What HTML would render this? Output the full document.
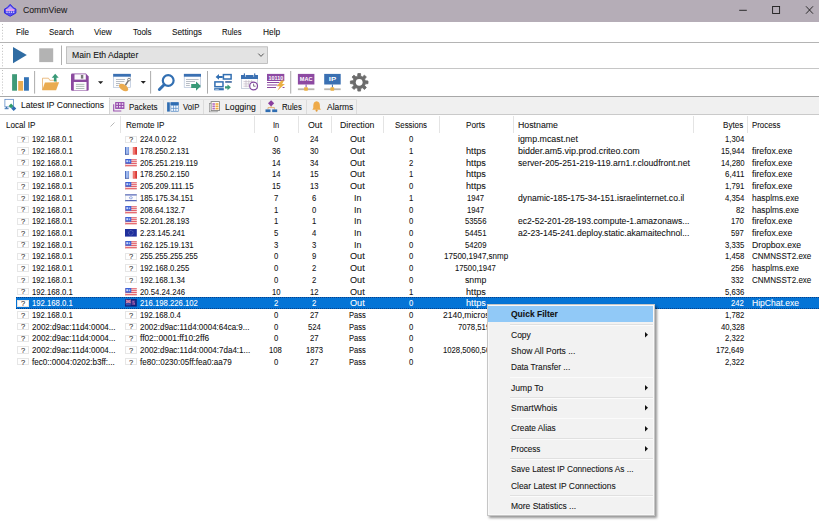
<!DOCTYPE html>
<html><head><meta charset="utf-8"><title>CommView</title>
<style>
html,body{margin:0;padding:0;background:#fff;overflow:hidden}
body{width:819px;height:522px;position:relative;font-family:"Liberation Sans",sans-serif;font-size:8.5px;color:#111}
.t{-webkit-text-stroke:0.07px currentColor;position:absolute;white-space:pre;line-height:12px;height:12px;transform-origin:0 50%;display:block}
svg{position:absolute;overflow:visible}
</style></head><body>
<div style="position:absolute;left:0px;top:0px;width:819px;height:22px;background:#b5adb7;"></div>
<svg style="left:4px;top:3.6px" width="12.4" height="12.6" viewBox="0 0 25 25">
<polygon points="12.5,0.5 19,7.5 24,10 24,18 12.5,24.5 1,18 1,10 6,7.5" fill="#5a50f0"/>
<polygon points="12.5,0.5 19,7.5 24,10 24,18 12.5,24.5 1,18 1,10 6,7.5" fill="none" stroke="#2f2ae0" stroke-width="2"/>
<polygon points="12.5,4 18,9 21,11 4,11 7,9" fill="#b9a0f6"/>
<rect x="4" y="10" width="17" height="4" fill="#e6a0ee"/>
<rect x="3" y="14" width="19" height="4.4" fill="#3a35e4"/>
<rect x="4.5" y="15" width="3" height="2.4" fill="#fff"/><rect x="9" y="15" width="3" height="2.4" fill="#eef"/><rect x="13.5" y="15" width="3" height="2.4" fill="#fff"/><rect x="18" y="15" width="3" height="2.4" fill="#eef"/>
</svg>
<span class="t" style="left:22.90px;top:4.40px;transform:scaleX(0.9886);font-size:8.8px;color:#1a1a1a">CommView</span>
<svg style="left:735px;top:0" width="84" height="22" viewBox="0 0 84 22" fill="none" stroke="#1c1c1c" stroke-width="0.9">
<path d="M4.2 10.3H11.8"/>
<rect x="37.6" y="6.5" width="7" height="7"/>
<path d="M71 6.3L78 13.7M78 6.3L71 13.7"/>
</svg>
<div style="position:absolute;left:0px;top:22px;width:819px;height:20px;background:#fff;"></div>
<span class="t" style="left:15.80px;top:26.20px;transform:scaleX(0.9286);font-size:8.7px">File</span>
<span class="t" style="left:48.60px;top:26.20px;transform:scaleX(0.9081);font-size:8.7px">Search</span>
<span class="t" style="left:94.00px;top:26.20px;transform:scaleX(0.9525);font-size:8.7px">View</span>
<span class="t" style="left:132.60px;top:26.20px;transform:scaleX(0.9171);font-size:8.7px">Tools</span>
<span class="t" style="left:171.70px;top:26.20px;transform:scaleX(0.9525);font-size:8.7px">Settings</span>
<span class="t" style="left:222.10px;top:26.20px;transform:scaleX(0.8776);font-size:8.7px">Rules</span>
<span class="t" style="left:262.50px;top:26.20px;transform:scaleX(0.9622);font-size:8.7px">Help</span>
<svg style="left:0;top:0" width="6" height="120"><rect x="2" y="24.0" width="1" height="1" fill="#bdbdbd"/><rect x="2" y="26.9" width="1" height="1" fill="#bdbdbd"/><rect x="2" y="29.8" width="1" height="1" fill="#bdbdbd"/><rect x="2" y="32.7" width="1" height="1" fill="#bdbdbd"/><rect x="2" y="35.6" width="1" height="1" fill="#bdbdbd"/><rect x="2" y="38.5" width="1" height="1" fill="#bdbdbd"/></svg>
<div style="position:absolute;left:0px;top:42px;width:819px;height:1px;background:#b4b4b4;"></div>
<svg style="left:0;top:0" width="6" height="120"><rect x="2" y="45.0" width="1" height="1" fill="#bdbdbd"/><rect x="2" y="47.9" width="1" height="1" fill="#bdbdbd"/><rect x="2" y="50.8" width="1" height="1" fill="#bdbdbd"/><rect x="2" y="53.7" width="1" height="1" fill="#bdbdbd"/><rect x="2" y="56.6" width="1" height="1" fill="#bdbdbd"/><rect x="2" y="59.5" width="1" height="1" fill="#bdbdbd"/><rect x="2" y="62.4" width="1" height="1" fill="#bdbdbd"/><rect x="2" y="65.3" width="1" height="1" fill="#bdbdbd"/></svg>
<svg style="left:0;top:43px" width="280" height="25" viewBox="0 43 280 25">
<polygon points="13,47 13,63.3 26.8,55.1" fill="#2f6ca3"/>
<rect x="39.2" y="48.3" width="14" height="13.8" fill="#b3b3b3"/>
<rect x="61" y="45.5" width="0.9" height="19.5" fill="#a8a8a8"/>
<rect x="66.5" y="46.8" width="201" height="16.6" fill="#e3e3e3" stroke="#b5b5b5" stroke-width="0.8"/>
<path d="M258.3 53.6L261 56.4L263.7 53.6" fill="none" stroke="#444" stroke-width="0.9"/>
</svg>
<span class="t" style="left:71.80px;top:49.40px;transform:scaleX(0.9947);font-size:8.7px">Main Eth Adapter</span>
<div style="position:absolute;left:0px;top:68.0px;width:819px;height:1px;background:#c6c6c6;"></div>
<svg style="left:0;top:0" width="6" height="120"><rect x="2" y="70.0" width="1" height="1" fill="#bdbdbd"/><rect x="2" y="72.9" width="1" height="1" fill="#bdbdbd"/><rect x="2" y="75.8" width="1" height="1" fill="#bdbdbd"/><rect x="2" y="78.7" width="1" height="1" fill="#bdbdbd"/><rect x="2" y="81.6" width="1" height="1" fill="#bdbdbd"/><rect x="2" y="84.5" width="1" height="1" fill="#bdbdbd"/><rect x="2" y="87.4" width="1" height="1" fill="#bdbdbd"/><rect x="2" y="90.3" width="1" height="1" fill="#bdbdbd"/><rect x="2" y="93.2" width="1" height="1" fill="#bdbdbd"/></svg>
<svg style="left:0;top:0" width="400" height="96" viewBox="0 0 400 96"><rect x="12.1" y="74.2" width="4.9" height="16.5" fill="#3f9a78"/><rect x="18.2" y="81" width="4.9" height="9.7" fill="#eaab50"/><rect x="24" y="77.2" width="4.9" height="13.5" fill="#3373b6"/><rect x="34.2" y="71" width="0.9" height="22.6" fill="#a2a2a2"/><path d="M42.5 90v-11.8h6l1.3 2.1h6.4v3" fill="#fffdf8" stroke="#e2a355" stroke-width="0.7"/><path d="M44.9 82.6l14.2-0.3-3 8h-13.9z" fill="#eaab50"/><path d="M55.2 73.8l3.5 3.9h-2.2v3.8h-2.6v-3.8h-2.2z" fill="#3a9a78"/><path d="M71 74.9q0-1.3 1.3-1.3h13.6l2.8 2.8v13q0 1.3-1.3 1.3h-15.1q-1.3 0-1.3-1.3z" fill="#8b4a9f"/><rect x="74.5" y="74.3" width="11.3" height="5.3" fill="#fbf9fc"/><rect x="80.9" y="75" width="2.4" height="3.6" fill="#777"/><rect x="73.8" y="82" width="12.7" height="8.3" fill="#fcfcfc"/><rect x="75.9" y="83.9" width="8.5" height="0.8" fill="#9ab0a4"/><rect x="75.9" y="85.9" width="8.5" height="0.8" fill="#9ab0a4"/><rect x="75.9" y="88" width="8.5" height="0.8" fill="#9ab0a4"/><polygon points="98,81.2 103.2,81.2 100.6,83.9" fill="#222"/><rect x="113.5" y="74.2" width="17" height="13.3" fill="#fcfcfd" stroke="#a9bad2" stroke-width="0.6"/><rect x="113.2" y="73.9" width="17.6" height="2.8" fill="#3a70b2"/><rect x="116" y="79.1" width="9" height="0.7" fill="#9aa3ad"/><rect x="116" y="81.1" width="8.4" height="0.7" fill="#9aa3ad"/><rect x="116" y="83.1" width="4.2" height="0.7" fill="#9aa3ad"/><rect x="116" y="85.1" width="2.6" height="0.7" fill="#9aa3ad"/><path d="M125.6 85l2.8-4.3" stroke="#7a7a7a" stroke-width="1.5" stroke-linecap="round"/><circle cx="129" cy="79.6" r="1.35" fill="#fff" stroke="#7a7a7a" stroke-width="0.9"/><ellipse cx="123.6" cy="87.5" rx="5.2" ry="2.9" transform="rotate(32 123.6 87.5)" fill="#eaab50"/><polygon points="140.7,81.1 145.9,81.1 143.3,83.8" fill="#222"/><rect x="150.2" y="71" width="0.9" height="22.6" fill="#a2a2a2"/><path d="M163.6 85.2l-4.2 4.3" stroke="#326fb2" stroke-width="3" stroke-linecap="round"/><circle cx="168.2" cy="80.5" r="5.4" fill="#fff" stroke="#326fb2" stroke-width="2.2"/><rect x="184.2" y="74.2" width="16.5" height="13.4" fill="#fcfcfd" stroke="#a9bad2" stroke-width="0.6"/><rect x="183.9" y="73.9" width="17.1" height="2.8" fill="#3a70b2"/><rect x="186" y="79" width="12.6" height="0.7" fill="#9aa3ad"/><rect x="186" y="81" width="9" height="0.7" fill="#9aa3ad"/><rect x="186" y="83" width="3.8" height="0.7" fill="#9aa3ad"/><rect x="186" y="85" width="3.8" height="0.7" fill="#9aa3ad"/><path d="M191.2 84.1h4.8v-2.7l4.9 4.7-4.9 4.7v-2.9h-4.8z" fill="#3a9a78"/><rect x="207" y="71" width="0.9" height="22.6" fill="#a2a2a2"/><path d="M215.6 76.9l3.4-2.8v1.8h3.7v2h-3.7v1.8z" fill="#326fb2"/><rect x="223.4" y="74.6" width="7.7" height="4.4" fill="#fff" stroke="#326fb2" stroke-width="1.5"/><rect x="225.2" y="81.2" width="6.6" height="1.5" fill="#2d5a96"/><rect x="214.9" y="81.9" width="8.1" height="4.8" fill="#fff" stroke="#326fb2" stroke-width="1.5"/><rect x="214.2" y="88.1" width="9.6" height="2.2" fill="#326fb2"/><rect x="215.2" y="88.9" width="3.6" height="0.7" fill="#dfe8f4"/><path d="M230.9 87.3l-3.4 2.9v-1.8h-2.5v-2.2h2.5v-1.8z" fill="#3a9a78"/><rect x="241.3" y="75.3" width="16.4" height="13" fill="#fcfcfd" stroke="#a9b4c8" stroke-width="0.6"/><rect x="241" y="75" width="17" height="4" fill="#3a70b2"/><rect x="243.8" y="73.4" width="1.2" height="3.4" fill="#3a70b2"/><rect x="254.1" y="73.4" width="1.2" height="3.4" fill="#3a70b2"/><rect x="245" y="75" width="0.7" height="1.8" fill="#dfe8f4"/><rect x="253.4" y="75" width="0.7" height="1.8" fill="#dfe8f4"/><path d="M243.5 81.6h9M243.5 83.9h6M243.5 86.2h5M246 80.2v7M248.8 80.2v7M251.6 80.2v3" stroke="#c3b8c6" stroke-width="0.7" fill="none"/><circle cx="253.6" cy="86" r="3.9" fill="#fff" stroke="#81459e" stroke-width="1.2"/><path d="M253.6 83.7v2.5h2" stroke="#4a3a5a" stroke-width="0.7" fill="none"/><rect x="267" y="73.9" width="17.3" height="7.1" fill="#8d4aa2"/><rect x="267" y="82" width="12.4" height="1" fill="#8d4aa2"/><rect x="267" y="84.5" width="10.6" height="1" fill="#8d4aa2"/><rect x="267" y="87" width="9" height="1" fill="#8d4aa2"/><rect x="282.6" y="87" width="1.9" height="1" fill="#8d4aa2"/><path d="M281.2 80.4h2.9l-2 3.6h2.8l-7.6 6.7 2.5-4.5h-3z" fill="#eab045"/><rect x="290.3" y="71" width="0.9" height="22.6" fill="#a2a2a2"/><rect x="297.9" y="73.9" width="16.5" height="10.6" fill="#8d4aa2"/><rect x="297.9" y="88.35" width="16.5" height="1.8" fill="#b9b6b0"/><rect x="305.6" y="84.5" width="1" height="3" fill="#8d4aa2"/><rect x="304.1" y="87.2" width="3.8" height="3.5" rx="0.6" fill="#eab045"/><rect x="324.2" y="73.9" width="16.5" height="10.6" fill="#3a70b2"/><rect x="324.2" y="88.35" width="16.5" height="1.8" fill="#b9b6b0"/><rect x="331.9" y="84.5" width="1" height="3" fill="#3a70b2"/><rect x="330.4" y="87.2" width="3.8" height="3.5" rx="0.6" fill="#eab045"/><text x="306.15" y="81.4" font-family="Liberation Sans,sans-serif" font-weight="bold" font-size="6" fill="#fff" text-anchor="middle" textLength="12.8" lengthAdjust="spacingAndGlyphs">MAC</text><text x="332.45" y="81.4" font-family="Liberation Sans,sans-serif" font-weight="bold" font-size="6" fill="#fff" text-anchor="middle" textLength="7.4" lengthAdjust="spacingAndGlyphs">IP</text><text x="275.9" y="79.8" font-family="Liberation Sans,sans-serif" font-weight="bold" font-size="6" fill="#fff" text-anchor="middle" textLength="14.6" lengthAdjust="spacingAndGlyphs">10110</text><polygon points="368.00,80.97 368.00,83.63 365.30,83.86 364.62,85.51 366.36,87.58 364.48,89.46 362.41,87.72 360.76,88.40 360.53,91.10 357.87,91.10 357.64,88.40 355.99,87.72 353.92,89.46 352.04,87.58 353.78,85.51 353.10,83.86 350.40,83.63 350.40,80.97 353.10,80.74 353.78,79.09 352.04,77.02 353.92,75.14 355.99,76.88 357.64,76.20 357.87,73.50 360.53,73.50 360.76,76.20 362.41,76.88 364.48,75.14 366.36,77.02 364.62,79.09 365.30,80.74" fill="#6c6c6c" stroke="#6c6c6c" stroke-width="0.8" stroke-linejoin="round"/><circle cx="359.2" cy="82.3" r="3.4" fill="#fff"/></svg>
<div style="position:absolute;left:0px;top:95.8px;width:819px;height:1px;background:#a8a8a8;"></div>
<div style="position:absolute;left:0px;top:96.8px;width:819px;height:18px;background:#f0f0f0;"></div>
<div style="position:absolute;left:0px;top:96.8px;width:109px;height:18.2px;background:#fff;"></div>
<div style="position:absolute;left:109px;top:98px;width:0.8px;height:16px;background:#d5d5d5;"></div>
<div style="position:absolute;left:162.7px;top:98.8px;width:0.8px;height:15px;background:#dcdcdc;"></div>
<div style="position:absolute;left:203.3px;top:98.8px;width:0.8px;height:15px;background:#dcdcdc;"></div>
<div style="position:absolute;left:260.2px;top:98.8px;width:0.8px;height:15px;background:#dcdcdc;"></div>
<div style="position:absolute;left:306.1px;top:98.8px;width:0.8px;height:15px;background:#dcdcdc;"></div>
<div style="position:absolute;left:356.1px;top:98.8px;width:0.8px;height:15px;background:#dcdcdc;"></div>
<div style="position:absolute;left:109px;top:98.6px;width:248px;height:0.8px;background:#e2e2e2;"></div>
<div style="position:absolute;left:0px;top:113.9px;width:819px;height:1.4px;background:#cacaca;"></div>
<svg style="left:0;top:0" width="400" height="116" viewBox="0 0 400 116"><rect x="4.9" y="99.3" width="8.6" height="7.6" fill="#fff" stroke="#4a7cc0" stroke-width="0.7"/><rect x="4.6" y="108.2" width="4" height="1" fill="#3a70b2"/><rect x="5.8" y="106.8" width="1.4" height="1.6" fill="#3a70b2"/><rect x="9.4" y="104.2" width="3.4" height="3.4" transform="rotate(45 11.1 105.9)" fill="#2e9b6c"/><rect x="11.9" y="106.7" width="3.6" height="3.6" transform="rotate(45 13.7 108.5)" fill="#2f6db2"/><path d="M113.7 104.2v6.8h7.6" fill="none" stroke="#9a50b0" stroke-width="1.1"/><rect x="115.2" y="102.1" width="9.2" height="6.8" fill="#9346aa"/><rect x="116.3" y="103.2" width="1.6" height="1.6" fill="#f0e0f5"/><rect x="116.3" y="105.9" width="1.6" height="1.6" fill="#f0e0f5"/><rect x="119.0" y="103.2" width="1.6" height="1.6" fill="#f0e0f5"/><rect x="119.0" y="105.9" width="1.6" height="1.6" fill="#f0e0f5"/><rect x="121.7" y="103.2" width="1.6" height="1.6" fill="#f0e0f5"/><rect x="121.7" y="105.9" width="1.6" height="1.6" fill="#f0e0f5"/><rect x="167.1" y="102.3" width="2.7" height="9.3" fill="#2f6db2"/><rect x="170.6" y="102.3" width="8" height="9.3" fill="#4a84c4"/><rect x="170.6" y="102.3" width="8" height="2.7" fill="#2f6db2"/><rect x="171.2" y="105.6" width="1.9" height="2.3" fill="#f4f8fd"/><rect x="171.2" y="108.6" width="1.9" height="2.3" fill="#f4f8fd"/><rect x="173.7" y="105.6" width="1.9" height="2.3" fill="#f4f8fd"/><rect x="173.7" y="108.6" width="1.9" height="2.3" fill="#f4f8fd"/><rect x="176.2" y="105.6" width="1.9" height="2.3" fill="#f4f8fd"/><rect x="176.2" y="108.6" width="1.9" height="2.3" fill="#f4f8fd"/><rect x="209.6" y="103.4" width="7.6" height="8.4" fill="#f8f8f8" stroke="#8f8f8f" stroke-width="0.7"/><rect x="211.1" y="101.6" width="8.4" height="9" fill="#fffcf4" stroke="#7a7a7a" stroke-width="0.8"/><rect x="212.4" y="103.2" width="2.5" height="1.6" fill="#b06ac4"/><rect x="215.5" y="103.2" width="3" height="1.6" fill="#f0ac40"/><rect x="212.4" y="105.5" width="2.5" height="1.6" fill="#b06ac4"/><rect x="215.5" y="105.5" width="3" height="1.6" fill="#f0ac40"/><rect x="212.4" y="107.8" width="2.5" height="1.6" fill="#b06ac4"/><rect x="215.5" y="107.8" width="3" height="1.6" fill="#f0ac40"/><rect x="268.9" y="101.1" width="4.4" height="4.4" transform="rotate(45 271.1 103.3)" fill="#8a3f9e"/><path d="M271.1 106v1.6M268 109.6v-2h6.4v2" stroke="#e0a45c" stroke-width="0.8" fill="none"/><rect x="265.5" y="109.4" width="5" height="2.7" fill="#2f6db2"/><rect x="272.2" y="109.4" width="5" height="2.7" fill="#2f6db2"/><path d="M316.6 101.3q3.3 0.4 3.3 4.4v2.4l1 1.6h-8.6l1-1.6v-2.4q0-4 3.3-4.4z" fill="#eeaa48"/><circle cx="316.6" cy="110.6" r="1.1" fill="#e09a3a"/></svg>
<span class="t" style="left:21.00px;top:99.20px;transform:scaleX(0.9783);font-size:8.7px">Latest IP Connections</span>
<span class="t" style="left:129.40px;top:100.80px;transform:scaleX(0.9221);font-size:8.7px">Packets</span>
<span class="t" style="left:183.10px;top:100.80px;transform:scaleX(0.8933);font-size:8.7px">VoIP</span>
<span class="t" style="left:225.10px;top:100.80px;transform:scaleX(0.9961);font-size:8.7px">Logging</span>
<span class="t" style="left:281.90px;top:100.80px;transform:scaleX(0.8911);font-size:8.7px">Rules</span>
<span class="t" style="left:327.10px;top:100.80px;transform:scaleX(0.9729);font-size:8.7px">Alarms</span>
<div style="position:absolute;left:0px;top:115.7px;width:819px;height:16.3px;background:#fff;"></div>
<div style="position:absolute;left:120px;top:115.5px;width:0.8px;height:17.5px;background:#e4e4e4;"></div>
<div style="position:absolute;left:254px;top:115.5px;width:0.8px;height:17.5px;background:#e4e4e4;"></div>
<div style="position:absolute;left:297.5px;top:115.5px;width:0.8px;height:17.5px;background:#e4e4e4;"></div>
<div style="position:absolute;left:331.4px;top:115.5px;width:0.8px;height:17.5px;background:#e4e4e4;"></div>
<div style="position:absolute;left:383px;top:115.5px;width:0.8px;height:17.5px;background:#e4e4e4;"></div>
<div style="position:absolute;left:438.6px;top:115.5px;width:0.8px;height:17.5px;background:#e4e4e4;"></div>
<div style="position:absolute;left:513px;top:115.5px;width:0.8px;height:17.5px;background:#e4e4e4;"></div>
<div style="position:absolute;left:693px;top:115.5px;width:0.8px;height:17.5px;background:#e4e4e4;"></div>
<div style="position:absolute;left:746.5px;top:115.5px;width:0.8px;height:17.5px;background:#e4e4e4;"></div>
<span class="t" style="left:5.60px;top:118.70px;transform:scaleX(0.9538)">Local IP</span>
<svg style="left:109.5px;top:121.5px" width="5" height="5" viewBox="0 0 5 5"><path d="M0.5 4.5L4.5 0.5" stroke="#9a9a9a" stroke-width="0.7" fill="none"/></svg>
<span class="t" style="left:125.50px;top:118.70px;transform:scaleX(0.9563)">Remote IP</span>
<span class="t" style="left:272.70px;top:118.70px;transform:scaleX(0.8740)">In</span>
<span class="t" style="left:307.50px;top:118.70px;transform:scaleX(1.0363)">Out</span>
<span class="t" style="left:340.10px;top:118.70px;transform:scaleX(1.0254)">Direction</span>
<span class="t" style="left:394.90px;top:118.70px;transform:scaleX(0.9275)">Sessions</span>
<span class="t" style="left:466.20px;top:118.70px;transform:scaleX(0.9676)">Ports</span>
<span class="t" style="left:518.00px;top:118.70px;transform:scaleX(1.0323)">Hostname</span>
<span class="t" style="left:723.40px;top:118.70px;transform:scaleX(0.9499)">Bytes</span>
<span class="t" style="left:752.00px;top:118.70px;transform:scaleX(0.9245)">Process</span>
<div style="position:absolute;left:17px;top:135.50px;width:11.6px;height:7.3px;box-sizing:border-box;border:0.8px solid #e6e6e6;background:#fefefe"></div>
<span class="t" style="left:20.70px;top:134.00px;transform:scaleX(0.9669);font-size:7.8px;color:#2a2a2a">?</span>
<span class="t" style="left:32.10px;top:133.30px;transform:scaleX(0.9075)">192.168.0.1</span>
<div style="position:absolute;left:125.2px;top:135.50px;width:11.6px;height:7.3px;box-sizing:border-box;border:0.8px solid #e6e6e6;background:#fefefe"></div>
<span class="t" style="left:128.90px;top:134.00px;transform:scaleX(0.9669);font-size:7.8px;color:#2a2a2a">?</span>
<span class="t" style="left:140.20px;top:133.30px;transform:scaleX(0.9073)">224.0.0.22</span>
<span class="t" style="left:273.66px;top:133.30px;transform:scaleX(0.9061)">0</span>
<span class="t" style="left:310.31px;top:133.30px;transform:scaleX(0.9061)">24</span>
<span class="t" style="left:349.95px;top:133.30px;transform:scaleX(1.0725)">Out</span>
<span class="t" style="left:408.76px;top:133.30px;transform:scaleX(0.9061)">0</span>
<span class="t" style="left:518.00px;top:133.30px;transform:scaleX(1.0388)">igmp.mcast.net</span>
<span class="t" style="left:724.90px;top:133.30px;transform:scaleX(0.9071)">1,304</span>
<div style="position:absolute;left:17px;top:147.22px;width:11.6px;height:7.3px;box-sizing:border-box;border:0.8px solid #e6e6e6;background:#fefefe"></div>
<span class="t" style="left:20.70px;top:145.72px;transform:scaleX(0.9669);font-size:7.8px;color:#2a2a2a">?</span>
<span class="t" style="left:32.10px;top:145.02px;transform:scaleX(0.9075)">192.168.0.1</span>
<svg style="left:125.2px;top:147.12px" width="11.8" height="7.6" viewBox="0 0 11.8 7.6"><rect width="4" height="7.6" fill="#7f9fe0"/><rect x="0" width="1" height="7.6" fill="#5070c0"/><rect x="1.2" width="1.6" height="7.6" fill="#a9c0f0"/><rect x="4" width="3.8" height="7.6" fill="#f7f1f3"/><rect x="7.8" width="4" height="7.6" fill="#e8504a"/><rect x="10.8" width="1" height="7.6" fill="#d02a2a"/><rect x="8.4" width="1.2" height="7.6" fill="#f08a80"/><rect y="6.8999999999999995" width="4" height="0.7" fill="#4a5a98"/></svg>
<span class="t" style="left:140.20px;top:145.02px;transform:scaleX(0.9075)">178.250.2.131</span>
<span class="t" style="left:271.51px;top:145.02px;transform:scaleX(0.9061)">36</span>
<span class="t" style="left:310.31px;top:145.02px;transform:scaleX(0.9061)">30</span>
<span class="t" style="left:349.95px;top:145.02px;transform:scaleX(1.0725)">Out</span>
<span class="t" style="left:408.76px;top:145.02px;transform:scaleX(0.9061)">1</span>
<span class="t" style="left:465.88px;top:145.02px;transform:scaleX(1.0761)">https</span>
<span class="t" style="left:518.00px;top:145.02px;transform:scaleX(1.0479)">bidder.am5.vip.prod.criteo.com</span>
<span class="t" style="left:720.61px;top:145.02px;transform:scaleX(0.9075)">15,944</span>
<span class="t" style="left:752.00px;top:145.02px;transform:scaleX(1.0290)">firefox.exe</span>
<div style="position:absolute;left:17px;top:158.93px;width:11.6px;height:7.3px;box-sizing:border-box;border:0.8px solid #e6e6e6;background:#fefefe"></div>
<span class="t" style="left:20.70px;top:157.43px;transform:scaleX(0.9669);font-size:7.8px;color:#2a2a2a">?</span>
<span class="t" style="left:32.10px;top:156.73px;transform:scaleX(0.9075)">192.168.0.1</span>
<svg style="left:125.2px;top:158.83px" width="11.8" height="7.6" viewBox="0 0 11.8 7.6"><rect width="11.8" height="7.6" fill="#f6e4e4"/><rect y="0.30" width="11.8" height="0.95" fill="#e2525c"/><rect y="2.20" width="11.8" height="0.95" fill="#e2525c"/><rect y="4.10" width="11.8" height="0.95" fill="#e2525c"/><rect y="6.00" width="11.8" height="0.95" fill="#e2525c"/><rect width="6.3" height="4.7" fill="#3a62d8"/><rect x="1.3" y="1.2" width="1.8" height="2" fill="#c9d6f8"/><rect x="3.7" y="1.4" width="1.5" height="1.8" fill="#aebff2"/><rect y="6.8" width="11.8" height="0.8" fill="#f0b4b0"/><rect x="0" width="0.6" height="7.6" fill="#e8a8a8" opacity="0.7"/></svg>
<span class="t" style="left:140.20px;top:156.73px;transform:scaleX(0.9165)">205.251.219.119</span>
<span class="t" style="left:271.51px;top:156.73px;transform:scaleX(0.9061)">14</span>
<span class="t" style="left:310.31px;top:156.73px;transform:scaleX(0.9061)">34</span>
<span class="t" style="left:349.95px;top:156.73px;transform:scaleX(1.0725)">Out</span>
<span class="t" style="left:408.76px;top:156.73px;transform:scaleX(0.9061)">2</span>
<span class="t" style="left:465.88px;top:156.73px;transform:scaleX(1.0761)">https</span>
<span class="t" style="left:518.00px;top:156.73px;transform:scaleX(1.0170)">server-205-251-219-119.arn1.r.cloudfront.net</span>
<span class="t" style="left:720.61px;top:156.73px;transform:scaleX(0.9075)">14,280</span>
<span class="t" style="left:752.00px;top:156.73px;transform:scaleX(1.0290)">firefox.exe</span>
<div style="position:absolute;left:17px;top:170.64px;width:11.6px;height:7.3px;box-sizing:border-box;border:0.8px solid #e6e6e6;background:#fefefe"></div>
<span class="t" style="left:20.70px;top:169.14px;transform:scaleX(0.9669);font-size:7.8px;color:#2a2a2a">?</span>
<span class="t" style="left:32.10px;top:168.44px;transform:scaleX(0.9075)">192.168.0.1</span>
<svg style="left:125.2px;top:170.54px" width="11.8" height="7.6" viewBox="0 0 11.8 7.6"><rect width="4" height="7.6" fill="#7f9fe0"/><rect x="0" width="1" height="7.6" fill="#5070c0"/><rect x="1.2" width="1.6" height="7.6" fill="#a9c0f0"/><rect x="4" width="3.8" height="7.6" fill="#f7f1f3"/><rect x="7.8" width="4" height="7.6" fill="#e8504a"/><rect x="10.8" width="1" height="7.6" fill="#d02a2a"/><rect x="8.4" width="1.2" height="7.6" fill="#f08a80"/><rect y="6.8999999999999995" width="4" height="0.7" fill="#4a5a98"/></svg>
<span class="t" style="left:140.20px;top:168.44px;transform:scaleX(0.9075)">178.250.2.150</span>
<span class="t" style="left:271.51px;top:168.44px;transform:scaleX(0.9061)">14</span>
<span class="t" style="left:310.31px;top:168.44px;transform:scaleX(0.9061)">15</span>
<span class="t" style="left:349.95px;top:168.44px;transform:scaleX(1.0725)">Out</span>
<span class="t" style="left:408.76px;top:168.44px;transform:scaleX(0.9061)">1</span>
<span class="t" style="left:465.88px;top:168.44px;transform:scaleX(1.0761)">https</span>
<span class="t" style="left:724.90px;top:168.44px;transform:scaleX(0.9353)">6,411</span>
<span class="t" style="left:752.00px;top:168.44px;transform:scaleX(1.0290)">firefox.exe</span>
<div style="position:absolute;left:17px;top:182.36px;width:11.6px;height:7.3px;box-sizing:border-box;border:0.8px solid #e6e6e6;background:#fefefe"></div>
<span class="t" style="left:20.70px;top:180.86px;transform:scaleX(0.9669);font-size:7.8px;color:#2a2a2a">?</span>
<span class="t" style="left:32.10px;top:180.16px;transform:scaleX(0.9075)">192.168.0.1</span>
<svg style="left:125.2px;top:182.26px" width="11.8" height="7.6" viewBox="0 0 11.8 7.6"><rect width="11.8" height="7.6" fill="#f6e4e4"/><rect y="0.30" width="11.8" height="0.95" fill="#e2525c"/><rect y="2.20" width="11.8" height="0.95" fill="#e2525c"/><rect y="4.10" width="11.8" height="0.95" fill="#e2525c"/><rect y="6.00" width="11.8" height="0.95" fill="#e2525c"/><rect width="6.3" height="4.7" fill="#3a62d8"/><rect x="1.3" y="1.2" width="1.8" height="2" fill="#c9d6f8"/><rect x="3.7" y="1.4" width="1.5" height="1.8" fill="#aebff2"/><rect y="6.8" width="11.8" height="0.8" fill="#f0b4b0"/><rect x="0" width="0.6" height="7.6" fill="#e8a8a8" opacity="0.7"/></svg>
<span class="t" style="left:140.20px;top:180.16px;transform:scaleX(0.9273)">205.209.111.15</span>
<span class="t" style="left:271.51px;top:180.16px;transform:scaleX(0.9061)">15</span>
<span class="t" style="left:310.31px;top:180.16px;transform:scaleX(0.9061)">13</span>
<span class="t" style="left:349.95px;top:180.16px;transform:scaleX(1.0725)">Out</span>
<span class="t" style="left:408.76px;top:180.16px;transform:scaleX(0.9061)">0</span>
<span class="t" style="left:465.88px;top:180.16px;transform:scaleX(1.0761)">https</span>
<span class="t" style="left:724.90px;top:180.16px;transform:scaleX(0.9071)">1,791</span>
<span class="t" style="left:752.00px;top:180.16px;transform:scaleX(1.0290)">firefox.exe</span>
<div style="position:absolute;left:17px;top:194.07px;width:11.6px;height:7.3px;box-sizing:border-box;border:0.8px solid #e6e6e6;background:#fefefe"></div>
<span class="t" style="left:20.70px;top:192.57px;transform:scaleX(0.9669);font-size:7.8px;color:#2a2a2a">?</span>
<span class="t" style="left:32.10px;top:191.88px;transform:scaleX(0.9075)">192.168.0.1</span>
<svg style="left:125.2px;top:193.97px" width="11.8" height="7.6" viewBox="0 0 11.8 7.6"><rect width="11.8" height="7.6" fill="#fbfbfd"/><rect y="0.4" width="11.8" height="1" fill="#2f44a8"/><rect y="6.199999999999999" width="11.8" height="1" fill="#2f44a8"/><rect x="0" width="0.5" height="7.6" fill="#9ab" opacity="0.6"/><rect x="11.3" width="0.5" height="7.6" fill="#9ab" opacity="0.6"/><ellipse cx="5.9" cy="3.8" rx="1.5" ry="1.1" fill="none" stroke="#5a7ad0" stroke-width="0.6"/></svg>
<span class="t" style="left:140.20px;top:191.88px;transform:scaleX(0.9074)">185.175.34.151</span>
<span class="t" style="left:273.66px;top:191.88px;transform:scaleX(0.9061)">7</span>
<span class="t" style="left:312.46px;top:191.88px;transform:scaleX(0.9061)">6</span>
<span class="t" style="left:353.63px;top:191.88px;transform:scaleX(1.0359)">In</span>
<span class="t" style="left:408.76px;top:191.88px;transform:scaleX(0.9061)">1</span>
<span class="t" style="left:467.22px;top:191.88px;transform:scaleX(0.9068)">1947</span>
<span class="t" style="left:518.00px;top:191.88px;transform:scaleX(1.0169)">dynamic-185-175-34-151.israelinternet.co.il</span>
<span class="t" style="left:724.90px;top:191.88px;transform:scaleX(0.9071)">4,354</span>
<span class="t" style="left:752.00px;top:191.88px;transform:scaleX(0.9843)">hasplms.exe</span>
<div style="position:absolute;left:17px;top:205.79px;width:11.6px;height:7.3px;box-sizing:border-box;border:0.8px solid #e6e6e6;background:#fefefe"></div>
<span class="t" style="left:20.70px;top:204.29px;transform:scaleX(0.9669);font-size:7.8px;color:#2a2a2a">?</span>
<span class="t" style="left:32.10px;top:203.59px;transform:scaleX(0.9075)">192.168.0.1</span>
<svg style="left:125.2px;top:205.69px" width="11.8" height="7.6" viewBox="0 0 11.8 7.6"><rect width="11.8" height="7.6" fill="#f6e4e4"/><rect y="0.30" width="11.8" height="0.95" fill="#e2525c"/><rect y="2.20" width="11.8" height="0.95" fill="#e2525c"/><rect y="4.10" width="11.8" height="0.95" fill="#e2525c"/><rect y="6.00" width="11.8" height="0.95" fill="#e2525c"/><rect width="6.3" height="4.7" fill="#3a62d8"/><rect x="1.3" y="1.2" width="1.8" height="2" fill="#c9d6f8"/><rect x="3.7" y="1.4" width="1.5" height="1.8" fill="#aebff2"/><rect y="6.8" width="11.8" height="0.8" fill="#f0b4b0"/><rect x="0" width="0.6" height="7.6" fill="#e8a8a8" opacity="0.7"/></svg>
<span class="t" style="left:140.20px;top:203.59px;transform:scaleX(0.9074)">208.64.132.7</span>
<span class="t" style="left:273.66px;top:203.59px;transform:scaleX(0.9061)">1</span>
<span class="t" style="left:312.46px;top:203.59px;transform:scaleX(0.9061)">0</span>
<span class="t" style="left:353.63px;top:203.59px;transform:scaleX(1.0359)">In</span>
<span class="t" style="left:408.76px;top:203.59px;transform:scaleX(0.9061)">0</span>
<span class="t" style="left:467.22px;top:203.59px;transform:scaleX(0.9068)">1947</span>
<span class="t" style="left:735.62px;top:203.59px;transform:scaleX(0.9061)">82</span>
<span class="t" style="left:752.00px;top:203.59px;transform:scaleX(0.9843)">hasplms.exe</span>
<div style="position:absolute;left:17px;top:217.50px;width:11.6px;height:7.3px;box-sizing:border-box;border:0.8px solid #e6e6e6;background:#fefefe"></div>
<span class="t" style="left:20.70px;top:216.00px;transform:scaleX(0.9669);font-size:7.8px;color:#2a2a2a">?</span>
<span class="t" style="left:32.10px;top:215.31px;transform:scaleX(0.9075)">192.168.0.1</span>
<svg style="left:125.2px;top:217.41px" width="11.8" height="7.6" viewBox="0 0 11.8 7.6"><rect width="11.8" height="7.6" fill="#f6e4e4"/><rect y="0.30" width="11.8" height="0.95" fill="#e2525c"/><rect y="2.20" width="11.8" height="0.95" fill="#e2525c"/><rect y="4.10" width="11.8" height="0.95" fill="#e2525c"/><rect y="6.00" width="11.8" height="0.95" fill="#e2525c"/><rect width="6.3" height="4.7" fill="#3a62d8"/><rect x="1.3" y="1.2" width="1.8" height="2" fill="#c9d6f8"/><rect x="3.7" y="1.4" width="1.5" height="1.8" fill="#aebff2"/><rect y="6.8" width="11.8" height="0.8" fill="#f0b4b0"/><rect x="0" width="0.6" height="7.6" fill="#e8a8a8" opacity="0.7"/></svg>
<span class="t" style="left:140.20px;top:215.31px;transform:scaleX(0.9075)">52.201.28.193</span>
<span class="t" style="left:273.66px;top:215.31px;transform:scaleX(0.9061)">1</span>
<span class="t" style="left:312.46px;top:215.31px;transform:scaleX(0.9061)">1</span>
<span class="t" style="left:353.63px;top:215.31px;transform:scaleX(1.0359)">In</span>
<span class="t" style="left:408.76px;top:215.31px;transform:scaleX(0.9061)">0</span>
<span class="t" style="left:465.08px;top:215.31px;transform:scaleX(0.9073)">53556</span>
<span class="t" style="left:518.00px;top:215.31px;transform:scaleX(1.0105)">ec2-52-201-28-193.compute-1.amazonaws...</span>
<span class="t" style="left:731.33px;top:215.31px;transform:scaleX(0.9071)">170</span>
<span class="t" style="left:752.00px;top:215.31px;transform:scaleX(1.0290)">firefox.exe</span>
<div style="position:absolute;left:17px;top:229.22px;width:11.6px;height:7.3px;box-sizing:border-box;border:0.8px solid #e6e6e6;background:#fefefe"></div>
<span class="t" style="left:20.70px;top:227.72px;transform:scaleX(0.9669);font-size:7.8px;color:#2a2a2a">?</span>
<span class="t" style="left:32.10px;top:227.02px;transform:scaleX(0.9075)">192.168.0.1</span>
<svg style="left:125.2px;top:229.12px" width="11.8" height="7.6" viewBox="0 0 11.8 7.6"><rect width="11.8" height="7.6" fill="#1f2f9c"/><circle cx="5.9" cy="3.8" r="2.3" fill="none" stroke="#8a90c8" stroke-width="0.7" stroke-dasharray="0.7 0.6"/></svg>
<span class="t" style="left:140.20px;top:227.02px;transform:scaleX(0.9074)">2.23.145.241</span>
<span class="t" style="left:273.66px;top:227.02px;transform:scaleX(0.9061)">5</span>
<span class="t" style="left:312.46px;top:227.02px;transform:scaleX(0.9061)">4</span>
<span class="t" style="left:353.63px;top:227.02px;transform:scaleX(1.0359)">In</span>
<span class="t" style="left:408.76px;top:227.02px;transform:scaleX(0.9061)">0</span>
<span class="t" style="left:465.08px;top:227.02px;transform:scaleX(0.9073)">54451</span>
<span class="t" style="left:518.00px;top:227.02px;transform:scaleX(1.0142)">a2-23-145-241.deploy.static.akamaitechnol...</span>
<span class="t" style="left:731.33px;top:227.02px;transform:scaleX(0.9071)">597</span>
<span class="t" style="left:752.00px;top:227.02px;transform:scaleX(1.0290)">firefox.exe</span>
<div style="position:absolute;left:17px;top:240.94px;width:11.6px;height:7.3px;box-sizing:border-box;border:0.8px solid #e6e6e6;background:#fefefe"></div>
<span class="t" style="left:20.70px;top:239.44px;transform:scaleX(0.9669);font-size:7.8px;color:#2a2a2a">?</span>
<span class="t" style="left:32.10px;top:238.74px;transform:scaleX(0.9075)">192.168.0.1</span>
<svg style="left:125.2px;top:240.84px" width="11.8" height="7.6" viewBox="0 0 11.8 7.6"><rect width="11.8" height="7.6" fill="#f6e4e4"/><rect y="0.30" width="11.8" height="0.95" fill="#e2525c"/><rect y="2.20" width="11.8" height="0.95" fill="#e2525c"/><rect y="4.10" width="11.8" height="0.95" fill="#e2525c"/><rect y="6.00" width="11.8" height="0.95" fill="#e2525c"/><rect width="6.3" height="4.7" fill="#3a62d8"/><rect x="1.3" y="1.2" width="1.8" height="2" fill="#c9d6f8"/><rect x="3.7" y="1.4" width="1.5" height="1.8" fill="#aebff2"/><rect y="6.8" width="11.8" height="0.8" fill="#f0b4b0"/><rect x="0" width="0.6" height="7.6" fill="#e8a8a8" opacity="0.7"/></svg>
<span class="t" style="left:140.20px;top:238.74px;transform:scaleX(0.9074)">162.125.19.131</span>
<span class="t" style="left:273.66px;top:238.74px;transform:scaleX(0.9061)">3</span>
<span class="t" style="left:312.46px;top:238.74px;transform:scaleX(0.9061)">3</span>
<span class="t" style="left:353.63px;top:238.74px;transform:scaleX(1.0359)">In</span>
<span class="t" style="left:408.76px;top:238.74px;transform:scaleX(0.9061)">0</span>
<span class="t" style="left:465.08px;top:238.74px;transform:scaleX(0.9073)">54209</span>
<span class="t" style="left:724.90px;top:238.74px;transform:scaleX(0.9071)">3,335</span>
<span class="t" style="left:752.00px;top:238.74px;transform:scaleX(1.0202)">Dropbox.exe</span>
<div style="position:absolute;left:17px;top:252.65px;width:11.6px;height:7.3px;box-sizing:border-box;border:0.8px solid #e6e6e6;background:#fefefe"></div>
<span class="t" style="left:20.70px;top:251.15px;transform:scaleX(0.9669);font-size:7.8px;color:#2a2a2a">?</span>
<span class="t" style="left:32.10px;top:250.45px;transform:scaleX(0.9075)">192.168.0.1</span>
<div style="position:absolute;left:125.2px;top:252.65px;width:11.6px;height:7.3px;box-sizing:border-box;border:0.8px solid #e6e6e6;background:#fefefe"></div>
<span class="t" style="left:128.90px;top:251.15px;transform:scaleX(0.9669);font-size:7.8px;color:#2a2a2a">?</span>
<span class="t" style="left:140.20px;top:250.45px;transform:scaleX(0.9075)">255.255.255.255</span>
<span class="t" style="left:273.66px;top:250.45px;transform:scaleX(0.9061)">0</span>
<span class="t" style="left:312.46px;top:250.45px;transform:scaleX(0.9061)">9</span>
<span class="t" style="left:349.95px;top:250.45px;transform:scaleX(1.0725)">Out</span>
<span class="t" style="left:408.76px;top:250.45px;transform:scaleX(0.9061)">0</span>
<span class="t" style="left:443.70px;top:250.45px;transform:scaleX(0.9434)">17500,1947,snmp</span>
<span class="t" style="left:724.90px;top:250.45px;transform:scaleX(0.9071)">1,458</span>
<span class="t" style="left:752.00px;top:250.45px;transform:scaleX(0.9445)">CNMNSST2.exe</span>
<div style="position:absolute;left:17px;top:264.37px;width:11.6px;height:7.3px;box-sizing:border-box;border:0.8px solid #e6e6e6;background:#fefefe"></div>
<span class="t" style="left:20.70px;top:262.87px;transform:scaleX(0.9669);font-size:7.8px;color:#2a2a2a">?</span>
<span class="t" style="left:32.10px;top:262.17px;transform:scaleX(0.9075)">192.168.0.1</span>
<div style="position:absolute;left:125.2px;top:264.37px;width:11.6px;height:7.3px;box-sizing:border-box;border:0.8px solid #e6e6e6;background:#fefefe"></div>
<span class="t" style="left:128.90px;top:262.87px;transform:scaleX(0.9669);font-size:7.8px;color:#2a2a2a">?</span>
<span class="t" style="left:140.20px;top:262.17px;transform:scaleX(0.9075)">192.168.0.255</span>
<span class="t" style="left:273.66px;top:262.17px;transform:scaleX(0.9061)">0</span>
<span class="t" style="left:312.46px;top:262.17px;transform:scaleX(0.9061)">2</span>
<span class="t" style="left:349.95px;top:262.17px;transform:scaleX(1.0725)">Out</span>
<span class="t" style="left:408.76px;top:262.17px;transform:scaleX(0.9061)">0</span>
<span class="t" style="left:455.42px;top:262.17px;transform:scaleX(0.9072)">17500,1947</span>
<span class="t" style="left:731.33px;top:262.17px;transform:scaleX(0.9071)">256</span>
<span class="t" style="left:752.00px;top:262.17px;transform:scaleX(0.9843)">hasplms.exe</span>
<div style="position:absolute;left:17px;top:276.08px;width:11.6px;height:7.3px;box-sizing:border-box;border:0.8px solid #e6e6e6;background:#fefefe"></div>
<span class="t" style="left:20.70px;top:274.58px;transform:scaleX(0.9669);font-size:7.8px;color:#2a2a2a">?</span>
<span class="t" style="left:32.10px;top:273.88px;transform:scaleX(0.9075)">192.168.0.1</span>
<div style="position:absolute;left:125.2px;top:276.08px;width:11.6px;height:7.3px;box-sizing:border-box;border:0.8px solid #e6e6e6;background:#fefefe"></div>
<span class="t" style="left:128.90px;top:274.58px;transform:scaleX(0.9669);font-size:7.8px;color:#2a2a2a">?</span>
<span class="t" style="left:140.20px;top:273.88px;transform:scaleX(0.9074)">192.168.1.34</span>
<span class="t" style="left:273.66px;top:273.88px;transform:scaleX(0.9061)">0</span>
<span class="t" style="left:312.46px;top:273.88px;transform:scaleX(0.9061)">2</span>
<span class="t" style="left:349.95px;top:273.88px;transform:scaleX(1.0725)">Out</span>
<span class="t" style="left:408.76px;top:273.88px;transform:scaleX(0.9061)">0</span>
<span class="t" style="left:465.14px;top:273.88px;transform:scaleX(1.0247)">snmp</span>
<span class="t" style="left:731.33px;top:273.88px;transform:scaleX(0.9071)">332</span>
<span class="t" style="left:752.00px;top:273.88px;transform:scaleX(0.9445)">CNMNSST2.exe</span>
<div style="position:absolute;left:17px;top:287.80px;width:11.6px;height:7.3px;box-sizing:border-box;border:0.8px solid #e6e6e6;background:#fefefe"></div>
<span class="t" style="left:20.70px;top:286.30px;transform:scaleX(0.9669);font-size:7.8px;color:#2a2a2a">?</span>
<span class="t" style="left:32.10px;top:285.60px;transform:scaleX(0.9075)">192.168.0.1</span>
<svg style="left:125.2px;top:287.70px" width="11.8" height="7.6" viewBox="0 0 11.8 7.6"><rect width="11.8" height="7.6" fill="#f6e4e4"/><rect y="0.30" width="11.8" height="0.95" fill="#e2525c"/><rect y="2.20" width="11.8" height="0.95" fill="#e2525c"/><rect y="4.10" width="11.8" height="0.95" fill="#e2525c"/><rect y="6.00" width="11.8" height="0.95" fill="#e2525c"/><rect width="6.3" height="4.7" fill="#3a62d8"/><rect x="1.3" y="1.2" width="1.8" height="2" fill="#c9d6f8"/><rect x="3.7" y="1.4" width="1.5" height="1.8" fill="#aebff2"/><rect y="6.8" width="11.8" height="0.8" fill="#f0b4b0"/><rect x="0" width="0.6" height="7.6" fill="#e8a8a8" opacity="0.7"/></svg>
<span class="t" style="left:140.20px;top:285.60px;transform:scaleX(0.9074)">20.54.24.246</span>
<span class="t" style="left:271.51px;top:285.60px;transform:scaleX(0.9061)">10</span>
<span class="t" style="left:310.31px;top:285.60px;transform:scaleX(0.9061)">12</span>
<span class="t" style="left:349.95px;top:285.60px;transform:scaleX(1.0725)">Out</span>
<span class="t" style="left:408.76px;top:285.60px;transform:scaleX(0.9061)">1</span>
<span class="t" style="left:465.88px;top:285.60px;transform:scaleX(1.0761)">https</span>
<span class="t" style="left:724.90px;top:285.60px;transform:scaleX(0.9071)">5,636</span>
<div style="position:absolute;left:15.6px;top:297.46px;width:803.4px;height:11.6px;background:#0474d6;box-sizing:border-box;border-top:1px dotted #0a3f86;border-bottom:1px dotted #0a3f86"></div>
<div style="position:absolute;left:17px;top:299.51px;width:11.6px;height:7.3px;box-sizing:border-box;border:0.8px solid #e6e6e6;background:#fefefe"></div>
<span class="t" style="left:20.70px;top:298.01px;transform:scaleX(0.9669);font-size:7.8px;color:#2a2a2a">?</span>
<span class="t" style="left:32.10px;top:297.31px;transform:scaleX(0.9075);color:#fff">192.168.0.1</span>
<svg style="left:125.2px;top:299.41px" width="11.8" height="7.6" viewBox="0 0 11.8 7.6"><rect width="11.8" height="7.6" fill="#10207a"/><rect x="0.8" y="0.8" width="5" height="3.4" fill="#a06aa8"/><path d="M0.8 0.8L5.8 4.2M5.8 0.8L0.8 4.2" stroke="#e890a0" stroke-width="0.8"/><rect x="0.8" y="4.2" width="5" height="2.2" fill="#3a50b0"/><rect x="6.6" y="1.4" width="3.6" height="4.6" fill="#5a3f9a"/><rect x="7.6" y="2.2" width="1.2" height="1.2" fill="#c070b0"/><rect x="8.6" y="4.2" width="1.2" height="1.2" fill="#c070b0"/></svg>
<span class="t" style="left:140.20px;top:297.31px;transform:scaleX(0.9075);color:#fff">216.198.226.102</span>
<span class="t" style="left:273.66px;top:297.31px;transform:scaleX(0.9061);color:#fff">2</span>
<span class="t" style="left:312.46px;top:297.31px;transform:scaleX(0.9061);color:#fff">2</span>
<span class="t" style="left:349.95px;top:297.31px;transform:scaleX(1.0725);color:#fff">Out</span>
<span class="t" style="left:408.76px;top:297.31px;transform:scaleX(0.9061);color:#fff">0</span>
<span class="t" style="left:465.88px;top:297.31px;transform:scaleX(1.0761);color:#fff">https</span>
<span class="t" style="left:731.33px;top:297.31px;transform:scaleX(0.9071);color:#fff">242</span>
<span class="t" style="left:752.00px;top:297.31px;transform:scaleX(1.0041);color:#fff">HipChat.exe</span>
<div style="position:absolute;left:17px;top:311.22px;width:11.6px;height:7.3px;box-sizing:border-box;border:0.8px solid #e6e6e6;background:#fefefe"></div>
<span class="t" style="left:20.70px;top:309.72px;transform:scaleX(0.9669);font-size:7.8px;color:#2a2a2a">?</span>
<span class="t" style="left:32.10px;top:309.02px;transform:scaleX(0.9075)">192.168.0.1</span>
<div style="position:absolute;left:125.2px;top:311.22px;width:11.6px;height:7.3px;box-sizing:border-box;border:0.8px solid #e6e6e6;background:#fefefe"></div>
<span class="t" style="left:128.90px;top:309.72px;transform:scaleX(0.9669);font-size:7.8px;color:#2a2a2a">?</span>
<span class="t" style="left:140.20px;top:309.02px;transform:scaleX(0.9075)">192.168.0.4</span>
<span class="t" style="left:273.66px;top:309.02px;transform:scaleX(0.9061)">0</span>
<span class="t" style="left:310.31px;top:309.02px;transform:scaleX(0.9061)">27</span>
<span class="t" style="left:348.85px;top:309.02px;transform:scaleX(0.8940)">Pass</span>
<span class="t" style="left:408.76px;top:309.02px;transform:scaleX(0.9061)">0</span>
<span class="t" style="left:443.20px;top:309.02px;transform:scaleX(1.0031)">2140,microsoft-ds...</span>
<span class="t" style="left:724.90px;top:309.02px;transform:scaleX(0.9071)">1,782</span>
<div style="position:absolute;left:17px;top:322.94px;width:11.6px;height:7.3px;box-sizing:border-box;border:0.8px solid #e6e6e6;background:#fefefe"></div>
<span class="t" style="left:20.70px;top:321.44px;transform:scaleX(0.9669);font-size:7.8px;color:#2a2a2a">?</span>
<span class="t" style="left:32.10px;top:320.74px;transform:scaleX(0.9408)">2002:d9ac:11d4:0004...</span>
<div style="position:absolute;left:125.2px;top:322.94px;width:11.6px;height:7.3px;box-sizing:border-box;border:0.8px solid #e6e6e6;background:#fefefe"></div>
<span class="t" style="left:128.90px;top:321.44px;transform:scaleX(0.9669);font-size:7.8px;color:#2a2a2a">?</span>
<span class="t" style="left:140.20px;top:320.74px;transform:scaleX(0.9386)">2002:d9ac:11d4:0004:64ca:9...</span>
<span class="t" style="left:273.66px;top:320.74px;transform:scaleX(0.9061)">0</span>
<span class="t" style="left:308.17px;top:320.74px;transform:scaleX(0.9071)">524</span>
<span class="t" style="left:348.85px;top:320.74px;transform:scaleX(0.8940)">Pass</span>
<span class="t" style="left:408.76px;top:320.74px;transform:scaleX(0.9061)">0</span>
<span class="t" style="left:457.57px;top:320.74px;transform:scaleX(0.9073)">7078,5190</span>
<span class="t" style="left:720.61px;top:320.74px;transform:scaleX(0.9075)">40,328</span>
<div style="position:absolute;left:17px;top:334.66px;width:11.6px;height:7.3px;box-sizing:border-box;border:0.8px solid #e6e6e6;background:#fefefe"></div>
<span class="t" style="left:20.70px;top:333.16px;transform:scaleX(0.9669);font-size:7.8px;color:#2a2a2a">?</span>
<span class="t" style="left:32.10px;top:332.46px;transform:scaleX(0.9408)">2002:d9ac:11d4:0004...</span>
<div style="position:absolute;left:125.2px;top:334.66px;width:11.6px;height:7.3px;box-sizing:border-box;border:0.8px solid #e6e6e6;background:#fefefe"></div>
<span class="t" style="left:128.90px;top:333.16px;transform:scaleX(0.9669);font-size:7.8px;color:#2a2a2a">?</span>
<span class="t" style="left:140.20px;top:332.46px;transform:scaleX(0.9812)">ff02::0001:ff10:2ff6</span>
<span class="t" style="left:273.66px;top:332.46px;transform:scaleX(0.9061)">0</span>
<span class="t" style="left:310.31px;top:332.46px;transform:scaleX(0.9061)">27</span>
<span class="t" style="left:348.85px;top:332.46px;transform:scaleX(0.8940)">Pass</span>
<span class="t" style="left:408.76px;top:332.46px;transform:scaleX(0.9061)">0</span>
<span class="t" style="left:724.90px;top:332.46px;transform:scaleX(0.9071)">2,322</span>
<div style="position:absolute;left:17px;top:346.37px;width:11.6px;height:7.3px;box-sizing:border-box;border:0.8px solid #e6e6e6;background:#fefefe"></div>
<span class="t" style="left:20.70px;top:344.87px;transform:scaleX(0.9669);font-size:7.8px;color:#2a2a2a">?</span>
<span class="t" style="left:32.10px;top:344.17px;transform:scaleX(0.9408)">2002:d9ac:11d4:0004...</span>
<div style="position:absolute;left:125.2px;top:346.37px;width:11.6px;height:7.3px;box-sizing:border-box;border:0.8px solid #e6e6e6;background:#fefefe"></div>
<span class="t" style="left:128.90px;top:344.87px;transform:scaleX(0.9669);font-size:7.8px;color:#2a2a2a">?</span>
<span class="t" style="left:140.20px;top:344.17px;transform:scaleX(0.9411)">2002:d9ac:11d4:0004:7da4:1...</span>
<span class="t" style="left:269.37px;top:344.17px;transform:scaleX(0.9071)">108</span>
<span class="t" style="left:306.02px;top:344.17px;transform:scaleX(0.9068)">1873</span>
<span class="t" style="left:348.85px;top:344.17px;transform:scaleX(0.8940)">Pass</span>
<span class="t" style="left:408.76px;top:344.17px;transform:scaleX(0.9061)">0</span>
<span class="t" style="left:443.20px;top:344.17px;transform:scaleX(0.9074)">1028,5060,5061...</span>
<span class="t" style="left:716.32px;top:344.17px;transform:scaleX(0.9073)">172,649</span>
<div style="position:absolute;left:17px;top:358.08px;width:11.6px;height:7.3px;box-sizing:border-box;border:0.8px solid #e6e6e6;background:#fefefe"></div>
<span class="t" style="left:20.70px;top:356.58px;transform:scaleX(0.9669);font-size:7.8px;color:#2a2a2a">?</span>
<span class="t" style="left:32.10px;top:355.88px;transform:scaleX(0.9542)">fec0::0004:0202:b3ff:...</span>
<div style="position:absolute;left:125.2px;top:358.08px;width:11.6px;height:7.3px;box-sizing:border-box;border:0.8px solid #e6e6e6;background:#fefefe"></div>
<span class="t" style="left:128.90px;top:356.58px;transform:scaleX(0.9669);font-size:7.8px;color:#2a2a2a">?</span>
<span class="t" style="left:140.20px;top:355.88px;transform:scaleX(0.9480)">fe80::0230:05ff:fea0:aa79</span>
<span class="t" style="left:273.66px;top:355.88px;transform:scaleX(0.9061)">0</span>
<span class="t" style="left:310.31px;top:355.88px;transform:scaleX(0.9061)">27</span>
<span class="t" style="left:348.85px;top:355.88px;transform:scaleX(0.8940)">Pass</span>
<span class="t" style="left:408.76px;top:355.88px;transform:scaleX(0.9061)">0</span>
<span class="t" style="left:724.90px;top:355.88px;transform:scaleX(0.9071)">2,322</span>
<div style="position:absolute;left:486.6px;top:304.4px;width:168.39999999999998px;height:211.39999999999998px;box-sizing:border-box;background:#f2f2f2;border:0.8px solid #c6c6c6;box-shadow:2.2px 2.2px 2.5px rgba(0,0,0,0.42),inset 0 0 0 0.8px #fafafa"></div>
<div style="position:absolute;left:487.90000000000003px;top:306.0px;width:165.39999999999998px;height:16.4px;background:#91c9f7;"></div>
<span class="t" style="left:511.40px;top:308.20px;transform:scaleX(0.9898);font-size:8.6px;font-weight:bold">Quick Filter</span>
<div style="position:absolute;left:509.8px;top:323.825px;width:143.4px;height:0.7px;background:#e0e0e0;"></div>
<div style="position:absolute;left:509.8px;top:324.525px;width:143.4px;height:0.7px;background:#fbfbfb;"></div>
<span class="t" style="left:511.40px;top:328.65px;transform:scaleX(0.9890);font-size:8.6px">Copy</span>
<svg style="left:644.8px;top:332.05px" width="3.2" height="5.4" viewBox="0 0 3.2 5.4"><polygon points="0,0 3,2.7 0,5.4" fill="#111"/></svg>
<span class="t" style="left:511.40px;top:344.85px;transform:scaleX(0.9898);font-size:8.6px">Show All Ports ...</span>
<span class="t" style="left:511.40px;top:361.05px;transform:scaleX(0.9610);font-size:8.6px">Data Transfer ...</span>
<div style="position:absolute;left:509.8px;top:376.67499999999995px;width:143.4px;height:0.7px;background:#e0e0e0;"></div>
<div style="position:absolute;left:509.8px;top:377.37499999999994px;width:143.4px;height:0.7px;background:#fbfbfb;"></div>
<span class="t" style="left:511.40px;top:381.50px;transform:scaleX(0.9983);font-size:8.6px">Jump To</span>
<svg style="left:644.8px;top:384.90px" width="3.2" height="5.4" viewBox="0 0 3.2 5.4"><polygon points="0,0 3,2.7 0,5.4" fill="#111"/></svg>
<div style="position:absolute;left:509.8px;top:397.12499999999994px;width:143.4px;height:0.7px;background:#e0e0e0;"></div>
<div style="position:absolute;left:509.8px;top:397.82499999999993px;width:143.4px;height:0.7px;background:#fbfbfb;"></div>
<span class="t" style="left:511.40px;top:401.95px;transform:scaleX(0.9893);font-size:8.6px">SmartWhois</span>
<svg style="left:644.8px;top:405.35px" width="3.2" height="5.4" viewBox="0 0 3.2 5.4"><polygon points="0,0 3,2.7 0,5.4" fill="#111"/></svg>
<div style="position:absolute;left:509.8px;top:417.57499999999993px;width:143.4px;height:0.7px;background:#e0e0e0;"></div>
<div style="position:absolute;left:509.8px;top:418.2749999999999px;width:143.4px;height:0.7px;background:#fbfbfb;"></div>
<span class="t" style="left:511.40px;top:422.40px;transform:scaleX(0.9660);font-size:8.6px">Create Alias</span>
<svg style="left:644.8px;top:425.80px" width="3.2" height="5.4" viewBox="0 0 3.2 5.4"><polygon points="0,0 3,2.7 0,5.4" fill="#111"/></svg>
<div style="position:absolute;left:509.8px;top:438.0249999999999px;width:143.4px;height:0.7px;background:#e0e0e0;"></div>
<div style="position:absolute;left:509.8px;top:438.7249999999999px;width:143.4px;height:0.7px;background:#fbfbfb;"></div>
<span class="t" style="left:511.40px;top:442.85px;transform:scaleX(0.9468);font-size:8.6px">Process</span>
<svg style="left:644.8px;top:446.25px" width="3.2" height="5.4" viewBox="0 0 3.2 5.4"><polygon points="0,0 3,2.7 0,5.4" fill="#111"/></svg>
<div style="position:absolute;left:509.8px;top:458.4749999999999px;width:143.4px;height:0.7px;background:#e0e0e0;"></div>
<div style="position:absolute;left:509.8px;top:459.1749999999999px;width:143.4px;height:0.7px;background:#fbfbfb;"></div>
<span class="t" style="left:511.40px;top:463.30px;transform:scaleX(0.9623);font-size:8.6px">Save Latest IP Connections As ...</span>
<span class="t" style="left:511.40px;top:479.50px;transform:scaleX(0.9789);font-size:8.6px">Clear Latest IP Connections</span>
<div style="position:absolute;left:509.8px;top:495.1249999999999px;width:143.4px;height:0.7px;background:#e0e0e0;"></div>
<div style="position:absolute;left:509.8px;top:495.8249999999999px;width:143.4px;height:0.7px;background:#fbfbfb;"></div>
<span class="t" style="left:511.40px;top:499.95px;transform:scaleX(0.9878);font-size:8.6px">More Statistics ...</span>
</body></html>
